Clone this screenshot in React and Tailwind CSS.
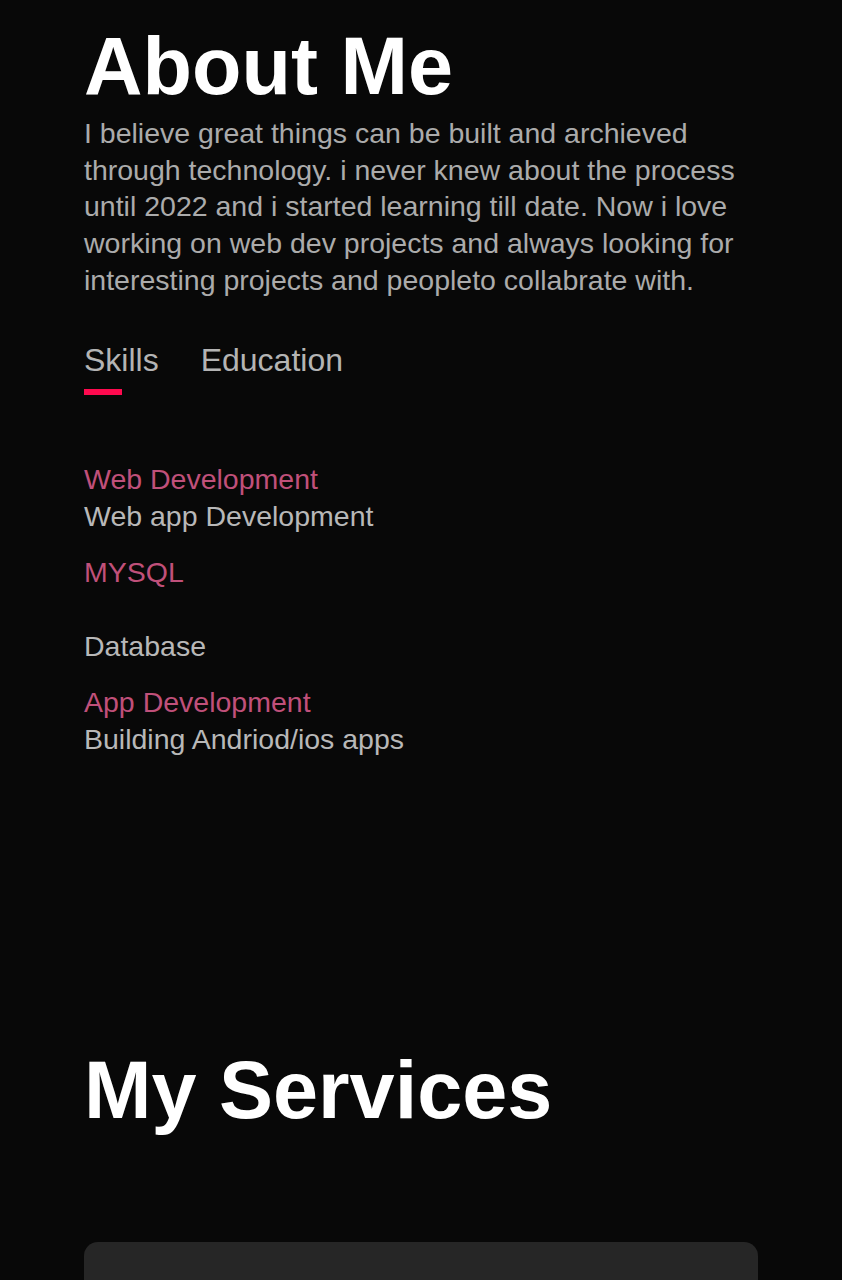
import React, { useState } from 'react';

const skills = [
  { title: 'Web Development', desc: 'Web app Development' },
  { title: 'MYSQL', desc: 'Database', gap: true },
  { title: 'App Development', desc: 'Building Andriod/ios apps' },
];

const App = () => {
  const [tab, setTab] = useState('skills');

  return (
    <div className="min-h-screen bg-[#080808] text-white font-['Liberation_Sans',Arial,sans-serif] overflow-hidden">
      <section className="px-[84px] pt-[26px]">
        {/* About */}
        <h1 className="text-[81px] leading-none font-bold">About Me</h1>
        <p className="mt-[8px] text-[28.5px] leading-[36.7px] text-[#ababab]">
          I believe great things can be built and archieved through technology. i never knew about the process until 2022 and i started learning till date. Now i love working on web dev projects and always looking for interesting projects and peopleto collabrate with.
        </p>

        <div className="mt-[41px] flex gap-[42px] text-[32px] leading-[40px] text-[#b4b4b4]">
          <button onClick={() => setTab('skills')} className="relative">
            Skills
            {tab === 'skills' && <span className="absolute left-0 top-[49px] h-[6px] w-[38px] bg-[#ff0a4f]" />}
          </button>
          <button onClick={() => setTab('education')} className="relative">
            Education
            {tab === 'education' && <span className="absolute left-0 top-[49px] h-[6px] w-[38px] bg-[#ff0a4f]" />}
          </button>
        </div>

        <ul className="mt-[81px] flex flex-col gap-[19px] text-[28.5px] leading-[37px]">
          {tab === 'skills' &&
            skills.map((s) => (
              <li key={s.title}>
                <div className="text-[#c0507a]">{s.title}</div>
                {s.gap && <div className="h-[37px]" />}
                <div className="text-[#b8b8b8]">{s.desc}</div>
              </li>
            ))}
          {tab === 'education' && (
            <li>
              <div className="text-[#c0507a]">2022 - Present</div>
              <div className="text-[#b8b8b8]">Self taught web development</div>
            </li>
          )}
        </ul>
      </section>

      {/* Services */}
      <section className="px-[84px] mt-[292px]">
        <h2 className="text-[81px] leading-none font-bold">My Services</h2>
        <div className="mt-[111px] h-[300px] rounded-[14px] bg-[#262626]" />
      </section>
    </div>
  );
};

export default App;
